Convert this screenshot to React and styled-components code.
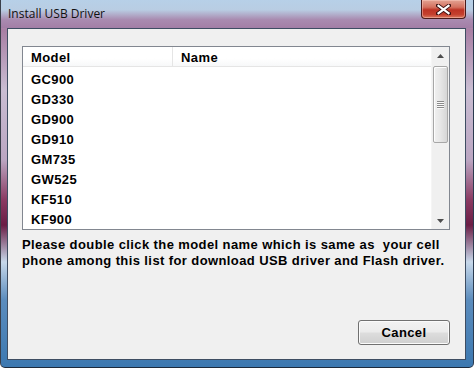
import React from "react";
import styled, { createGlobalStyle } from "styled-components";

const Global = createGlobalStyle`
  html, body { margin: 0; padding: 0; background: #ffffff; }
  body { width: 474px; height: 368px; overflow: hidden; }
`;

const Frame = styled.div`
  width: 474px;
  height: 368px;
  box-sizing: border-box;
  display: flex;
  flex-direction: column;
  border-left: 1px solid #3a3f4a;
  border-right: 1px solid #2a3a4f;
  border-bottom: 1px solid #1c2a3c;
  border-radius: 0 0 5px 5px;
  background:
    linear-gradient(180deg,
      #a9c3dc 0px, #bdd3e8 10px, #b49ab8 22px, #a87fa4 30px,
      #c9bdd2 90px, #bba6c2 160px, #8a3a62 200px, #6a1d45 225px,
      #c7d8ea 262px, #5b8cbd 300px, #3c78b0 368px);
  padding: 0 7px 7px 6px;
`;

const TitleBar = styled.div`
  height: 28px;
  display: flex;
  align-items: flex-start;
  background: linear-gradient(180deg, #b7d0e8 0%, #b9cde3 35%, #a98bb0 70%, #a37ea6 100%);
  margin: 0 -7px 0 -6px;
  padding: 0 8px 0 7px;
`;

const Title = styled.div`
  font-family: "Open Sans", "Liberation Sans", sans-serif;
  font-size: 12px;
  color: #111;
  line-height: 1;
  margin-top: 8px;
  flex: 1;
`;

const CloseButton = styled.div`
  width: 45px;
  height: 19px;
  box-sizing: border-box;
  margin-right: -1px;
  border: 1px solid #4a1b1b;
  border-top: none;
  border-radius: 0 0 4px 4px;
  background: linear-gradient(180deg, #e3a393 0%, #d4715f 40%, #bd3324 55%, #c4402e 80%, #d9785f 100%);
  box-shadow: inset 0 0 0 1px rgba(255, 210, 200, 0.45);
  display: flex;
  align-items: center;
  justify-content: center;
`;

const Client = styled.div`
  flex: 1;
  background: #f0f0f0;
  border: 1px solid #3e4d62;
  display: flex;
  flex-direction: column;
  padding: 17px 15px 14px 14px;
`;

const ListBox = styled.div`
  height: 184px;
  box-sizing: border-box;
  border: 1px solid #828790;
  background: #ffffff;
  display: flex;
`;

const ListBody = styled.div`
  flex: 1;
  display: flex;
  flex-direction: column;
  overflow: hidden;
`;

const Header = styled.div`
  height: 23px;
  box-sizing: border-box;
  display: flex;
  border-bottom: 1px solid #e5e5e5;
  background: linear-gradient(180deg, #ffffff 0%, #ffffff 60%, #f7f8f9 100%);
`;

const HeaderCell = styled.div`
  width: ${(p) => (p.$w ? `${p.$w}px` : "auto")};
  flex: ${(p) => (p.$w ? "none" : 1)};
  box-sizing: border-box;
  padding-left: 8px;
  padding-top: 1px;
  border-right: ${(p) => (p.$w ? "1px solid #e5e5e5" : "none")};
  font-family: "Liberation Sans", Arial, sans-serif;
  font-weight: bold;
  font-size: 13px;
  letter-spacing: 0.4px;
  color: #000;
  display: flex;
  align-items: center;
`;

const Rows = styled.div`
  padding-top: 2px;
  display: flex;
  flex-direction: column;
`;

const Row = styled.div`
  height: 20px;
  padding-left: 8px;
  display: flex;
  align-items: center;
  font-family: "Liberation Sans", Arial, sans-serif;
  font-weight: bold;
  font-size: 13px;
  letter-spacing: 0.4px;
  color: #000;
`;

const ScrollBar = styled.div`
  width: 17px;
  display: flex;
  flex-direction: column;
  background: #f0f0f0;
  border-left: 1px solid #f5f5f5;
`;

const ArrowBox = styled.div`
  height: 17px;
  display: flex;
  align-items: center;
  justify-content: center;
`;

const Track = styled.div`
  flex: 1;
  display: flex;
  flex-direction: column;
  padding: 2px 1px 0 1px;
`;

const Thumb = styled.div`
  height: 77px;
  box-sizing: border-box;
  border: 1px solid #a7a7a7;
  border-radius: 2px;
  background: linear-gradient(90deg, #f1f1f1 0%, #e6e6e6 50%, #d6d6d6 100%);
  box-shadow: inset 1px 1px 0 #fdfdfd;
  display: flex;
  align-items: center;
  justify-content: center;
`;

const Grip = styled.div`
  width: 7px;
  display: flex;
  flex-direction: column;
  gap: 1px;
  span {
    height: 1px;
    background: #8a8a8a;
    box-shadow: 0 1px 0 #fafafa;
  }
`;

const Message = styled.p`
  margin: 7px 0 0 0;
  font-family: "Liberation Sans", Arial, sans-serif;
  font-weight: bold;
  font-size: 13px;
  line-height: 16px;
  letter-spacing: 0.4px;
  color: #000;
  white-space: pre;
`;

const Footer = styled.div`
  flex: 1;
  display: flex;
  justify-content: flex-end;
  align-items: flex-end;
`;

const Button = styled.button`
  width: 92px;
  height: 25px;
  border: 1px solid #707070;
  border-radius: 3px;
  background: linear-gradient(180deg, #f2f2f2 0%, #ebebeb 48%, #dddddd 52%, #cfcfcf 100%);
  box-shadow: inset 0 0 0 1px #fbfbfb;
  font-family: "Liberation Sans", Arial, sans-serif;
  font-weight: bold;
  font-size: 13px;
  letter-spacing: 0.4px;
  color: #000;
  padding: 0;
`;

const models = ["GC900", "GD330", "GD900", "GD910", "GM735", "GW525", "KF510", "KF900"];

export default function App() {
  return (
    <>
      <Global />
      <Frame>
        <TitleBar>
          <Title>Install USB Driver</Title>
          <CloseButton>
            <svg width="15" height="11" viewBox="0 0 15 11">
              <path
                d="M2 1.5 L13 9.5 M13 1.5 L2 9.5"
                stroke="#3a1010"
                strokeWidth="4"
                strokeLinecap="square"
              />
              <path
                d="M2.5 1.8 L12.5 9.2 M12.5 1.8 L2.5 9.2"
                stroke="#ffffff"
                strokeWidth="2.2"
                strokeLinecap="square"
              />
            </svg>
          </CloseButton>
        </TitleBar>
        <Client>
          <ListBox>
            <ListBody>
              <Header>
                <HeaderCell $w={150}>Model</HeaderCell>
                <HeaderCell>Name</HeaderCell>
              </Header>
              <Rows>
                {models.map((m) => (
                  <Row key={m}>{m}</Row>
                ))}
              </Rows>
            </ListBody>
            <ScrollBar>
              <ArrowBox>
                <svg width="7" height="4" viewBox="0 0 7 4">
                  <path d="M0 4 L3.5 0 L7 4 Z" fill="#4d4d4d" />
                </svg>
              </ArrowBox>
              <Track>
                <Thumb>
                  <Grip>
                    <span />
                    <span />
                    <span />
                    <span />
                  </Grip>
                </Thumb>
              </Track>
              <ArrowBox>
                <svg width="7" height="4" viewBox="0 0 7 4">
                  <path d="M0 0 L7 0 L3.5 4 Z" fill="#4d4d4d" />
                </svg>
              </ArrowBox>
            </ScrollBar>
          </ListBox>
          <Message>
            {"Please double click the model name which is same as  your cell\nphone among this list for download USB driver and Flash driver."}
          </Message>
          <Footer>
            <Button>Cancel</Button>
          </Footer>
        </Client>
      </Frame>
    </>
  );
}
